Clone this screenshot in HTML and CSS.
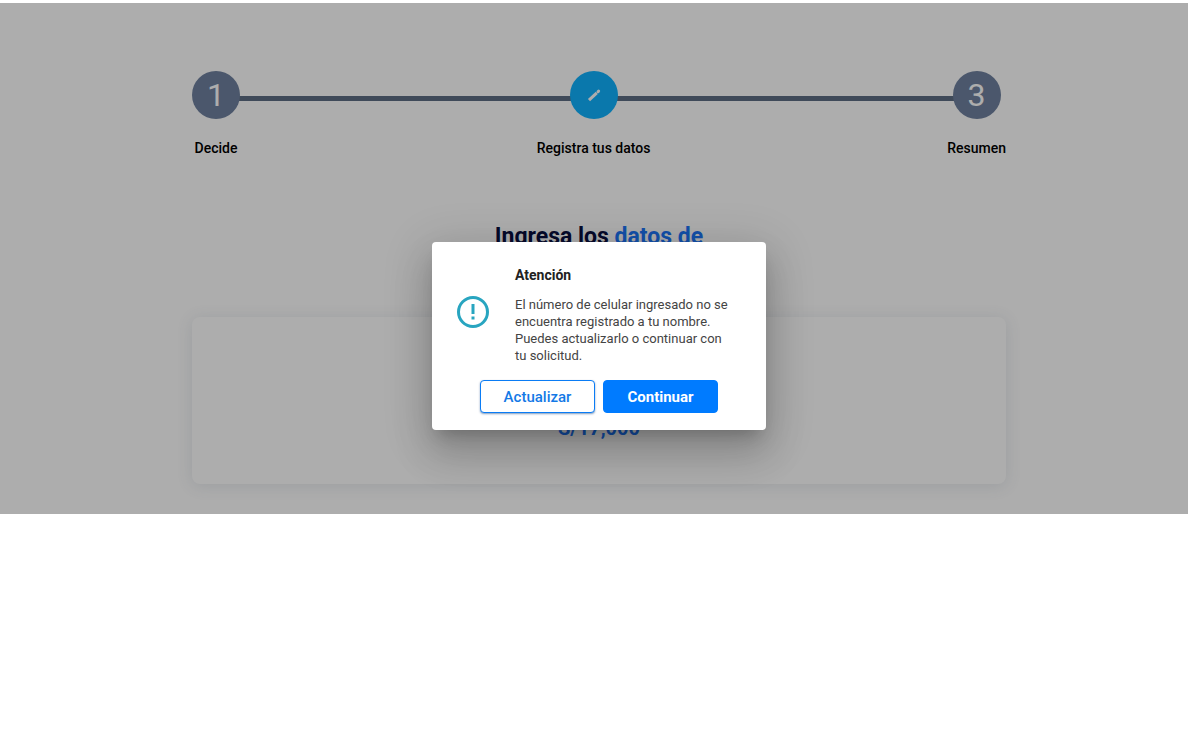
FILE: index.html
```html
<!DOCTYPE html>
<html lang="es">
<head>
<meta charset="utf-8">
<meta name="viewport" content="width=device-width, initial-scale=1">
<title>Registra tus datos</title>
<link rel="stylesheet" href="styles.css">
</head>
<body>
<div class="stage">
  <main class="content">
    <ol class="stepper">
      <li class="step"><span class="step-dot">1</span><span class="step-label">Decide</span></li>
      <li class="step" aria-current="step"><span class="step-dot step-dot-active">
        <svg width="16" height="16" viewBox="0 0 16 16" fill="none" stroke="#fff" stroke-width="3" aria-hidden="true"><path d="M3 13.200L10.800 5.800" /><path d="M12 4.700L12.600 4.100" stroke-linecap="round"/></svg>
      </span><span class="step-label">Registra tus datos</span></li>
      <li class="step"><span class="step-dot">3</span><span class="step-label">Resumen</span></li>
    </ol>
    <h1 class="title">Ingresa los <span class="accent">datos de</span></h1>
    <section class="card"><p class="amount">S/17,000</p></section>
  </main>
  <div class="backdrop">
    <div class="dialog" role="alertdialog" aria-modal="true" aria-labelledby="dialog-title" aria-describedby="dialog-text">
      <div class="dialog-body">
        <svg class="dialog-icon" width="34" height="34" viewBox="0 0 34 34" fill="none" stroke="#28a5c0" stroke-width="3" aria-hidden="true"><circle cx="17" cy="17" r="14.500"/><path d="M17 9v10M17 21.500v3"/></svg>
        <div class="dialog-copy">
          <h2 class="dialog-title" id="dialog-title">Atención</h2>
          <p class="dialog-text" id="dialog-text">El número de celular ingresado no se encuentra registrado a tu nombre. Puedes actualizarlo o continuar con tu solicitud.</p>
        </div>
      </div>
      <div class="dialog-actions">
        <button class="button button-outline" type="button">Actualizar</button>
        <button class="button button-solid" type="button">Continuar</button>
      </div>
    </div>
  </div>
</div>
</body>
</html>
```
FILE: styles.css
```css
* { box-sizing: border-box; }

body {
  margin: 0;
  background: #fff;
  color: #000;
  font-family: Roboto, "Liberation Sans", sans-serif;
}

h1, h2, p, ol { margin: 0; padding: 0; }

.stage {
  position: relative;
  margin: 3px 12px 0 0;
  padding: 68px 0 30px 10px;
  overflow: hidden;
}

.content {
  max-width: 814px;
  margin: 0 auto;
}

.stepper {
  position: relative;
  display: flex;
  justify-content: space-between;
  list-style: none;
}

.stepper::before {
  content: "";
  position: absolute;
  top: 25px;
  left: 24px;
  right: 32px;
  height: 5px;
  background: #5e6e84;
}

.step {
  position: relative;
  display: flex;
  flex-direction: column;
  align-items: center;
  gap: 20px;
  min-width: 48px;
}

.step-dot {
  display: grid;
  place-items: center;
  width: 48px;
  height: 48px;
  border-radius: 50%;
  background: #6f819f;
  color: #fff;
  font-size: 32px;
  line-height: 48px;
}

.step-dot-active { background: #0fb2fe; }

.step-label {
  font-size: 14px;
  font-weight: 500;
  line-height: 18px;
}

.title {
  margin-top: 65px;
  color: #0a1040;
  font-size: 23px;
  font-weight: 700;
  line-height: 30px;
  text-align: center;
}

.accent { color: #1d76fa; }

.card {
  margin-top: 65px;
  padding: 97px 24px 42px;
  border-radius: 8px;
  background: #fff;
  box-shadow: 0 2px 16px rgba(70, 90, 120, 0.14);
}

.amount {
  color: #1d76fa;
  font-size: 20px;
  font-weight: 700;
  line-height: 28px;
  text-align: center;
}

.backdrop {
  position: absolute;
  inset: 0;
  display: flex;
  align-items: flex-start;
  justify-content: center;
  padding: 239px 0 0 10px;
  background: rgba(0, 0, 0, 0.32);
}

.dialog {
  width: 334px;
  padding: 23px 24px 17px;
  border-radius: 4px;
  background: #fff;
  box-shadow: 0 11px 15px -7px rgba(0, 0, 0, 0.2), 0 24px 38px 3px rgba(0, 0, 0, 0.14), 0 9px 46px 8px rgba(0, 0, 0, 0.12);
}

.dialog-body {
  display: flex;
  gap: 25px;
  padding-right: 8px;
}

.dialog-icon {
  flex: none;
  margin-top: 30px;
}

.dialog-copy { flex: 1; }

.dialog-title {
  color: #222;
  font-size: 14px;
  font-weight: 700;
  line-height: 20px;
}

.dialog-text {
  margin-top: 11px;
  color: #444;
  font-size: 13px;
  line-height: 17px;
}

.dialog-actions {
  display: flex;
  justify-content: center;
  gap: 8px;
  margin-top: 16px;
}

.button {
  width: 115px;
  height: 33px;
  border: 1px solid #0a7cf5;
  border-radius: 4px;
  font: 500 15px/20px Roboto, "Liberation Sans", sans-serif;
}

.button-outline {
  background: #fff;
  color: #1479e6;
  box-shadow: 0 1px 2px rgba(0, 60, 130, 0.5);
}

.button-solid {
  background: #007bff;
  border-color: #007bff;
  color: #fff;
  font-weight: 700;
}
```
